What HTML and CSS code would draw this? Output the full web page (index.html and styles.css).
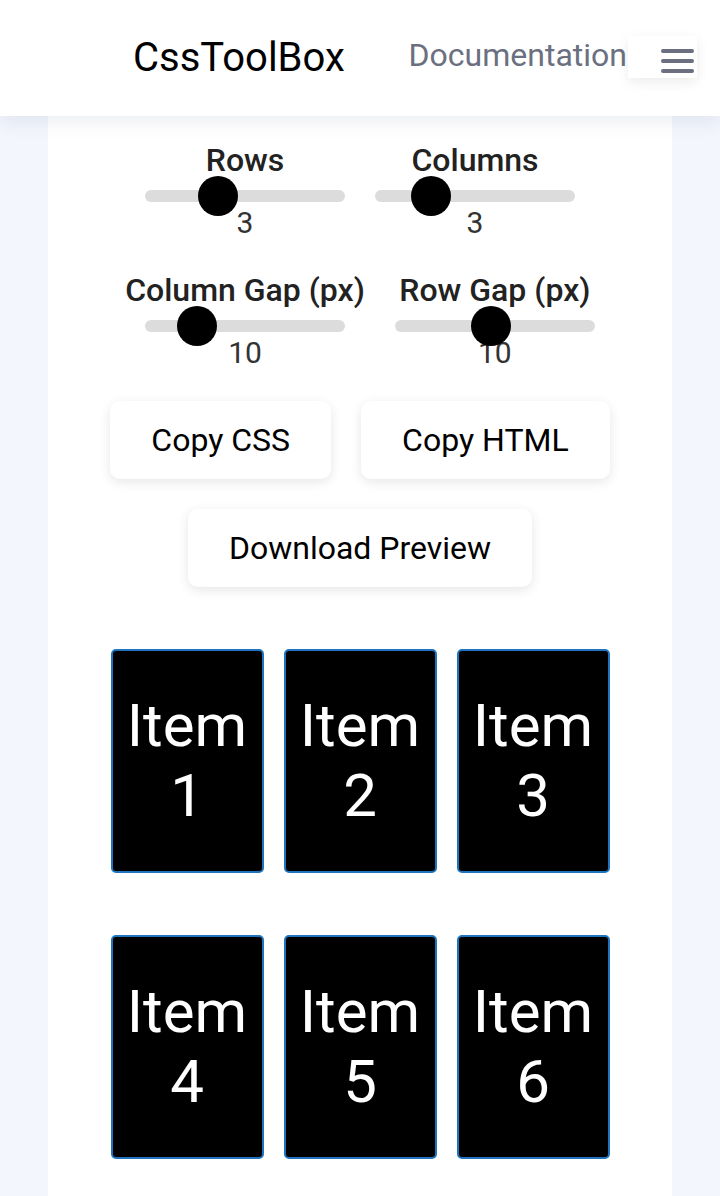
FILE: index.html
```html
<!DOCTYPE html>
<html lang="en">
<head>
<meta charset="utf-8">
<title>CssToolBox - Grid Generator</title>
<link rel="stylesheet" href="styles.css">
</head>
<body>
<header class="topbar">
  <div class="brand">CssToolBox</div>
  <nav class="nav">
    <a class="nav-link" href="#">Documentation</a>
    <button class="menu-btn" aria-label="Menu"><span></span><span></span><span></span></button>
  </nav>
</header>
<main class="card">
  <section class="controls">
    <div class="control">
      <div class="control-label">Rows</div>
      <div class="slider"><span class="thumb" style="left:53px"></span></div>
      <div class="control-value">3</div>
    </div>
    <div class="control">
      <div class="control-label">Columns</div>
      <div class="slider"><span class="thumb" style="left:36px"></span></div>
      <div class="control-value">3</div>
    </div>
    <div class="control">
      <div class="control-label">Column Gap (px)</div>
      <div class="slider"><span class="thumb" style="left:32px"></span></div>
      <div class="control-value">10</div>
    </div>
    <div class="control">
      <div class="control-label">Row Gap (px)</div>
      <div class="slider"><span class="thumb" style="left:76px"></span></div>
      <div class="control-value">10</div>
    </div>
  </section>
  <div class="actions">
    <button class="btn">Copy CSS</button>
    <button class="btn">Copy HTML</button>
    <button class="btn">Download Preview</button>
  </div>
  <div class="preview-grid">
    <div class="grid-item">Item 1</div>
    <div class="grid-item">Item 2</div>
    <div class="grid-item">Item 3</div>
    <div class="grid-item">Item 4</div>
    <div class="grid-item">Item 5</div>
    <div class="grid-item">Item 6</div>
  </div>
</main>
</body>
</html>
```
FILE: styles.css
```css
* { box-sizing: border-box; }

body {
  margin: 0;
  background: #f3f6fd;
  font-family: Roboto, "Noto Sans", "Liberation Sans", sans-serif;
  color: #222;
}

.topbar {
  position: relative;
  z-index: 2;
  height: 116px;
  background: #fff;
  display: flex;
  align-items: center;
  padding: 0 23px 0 133px;
  box-shadow: 0 6px 18px rgba(40, 50, 110, 0.09);
}

.brand {
  font-size: 40px;
  color: #000;
  line-height: 1;
}

.nav {
  margin-left: auto;
  display: flex;
  align-items: center;
}

.nav-link {
  font-size: 32px;
  color: #6b7080;
  text-decoration: none;
  line-height: 1;
  margin-top: -6px;
  margin-right: 1px;
}

.menu-btn {
  width: 69px;
  height: 42px;
  margin-top: -3px;
  background: #fff;
  border: none;
  box-shadow: 0 4px 12px rgba(0, 0, 0, 0.08);
  display: flex;
  flex-direction: column;
  justify-content: center;
  align-items: flex-end;
  gap: 6px;
  padding: 8px 3px 0 0;
}

.menu-btn span {
  display: block;
  width: 33px;
  height: 4px;
  border-radius: 2px;
  background: #6b6f80;
}

.card {
  width: 624px;
  margin: 0 auto;
  background: #fff;
  min-height: 1080px;
  padding: 25px 0 40px;
}

.controls {
  display: flex;
  flex-wrap: wrap;
  justify-content: center;
  column-gap: 30px;
  row-gap: 31px;
}

.control {
  display: flex;
  flex-direction: column;
  align-items: center;
}

.control-label {
  font-size: 32px;
  font-weight: 500;
  line-height: 38px;
  color: #222;
  margin-bottom: 11px;
  white-space: nowrap;
}

.slider {
  position: relative;
  width: 200px;
  height: 12px;
  border-radius: 6px;
  background: #dcdcdc;
}

.thumb {
  position: absolute;
  top: -14px;
  width: 40px;
  height: 40px;
  border-radius: 50%;
  background: #000;
}

.control-value {
  font-size: 30px;
  line-height: 35px;
  margin-top: 3px;
  color: #333;
}

.actions {
  display: flex;
  flex-wrap: wrap;
  justify-content: center;
  gap: 30px;
  margin-top: 31px;
}

.btn {
  height: 78px;
  padding: 0 41px;
  border: none;
  border-radius: 10px;
  background: #fff;
  font-family: Roboto, "Noto Sans", sans-serif;
  font-size: 32px;
  color: #000;
  box-shadow: 0 3px 12px rgba(0, 0, 0, 0.1);
}

.preview-grid {
  display: grid;
  grid-template-columns: repeat(3, 153px);
  grid-auto-rows: 224px;
  column-gap: 20px;
  row-gap: 62px;
  justify-content: center;
  margin-top: 62px;
}

.grid-item {
  display: flex;
  align-items: center;
  justify-content: center;
  text-align: center;
  background: #000;
  border: 2px solid #1f74c0;
  border-radius: 5px;
  color: #fff;
  font-size: 60px;
  line-height: 70px;
  padding: 0 4px;
}
```
